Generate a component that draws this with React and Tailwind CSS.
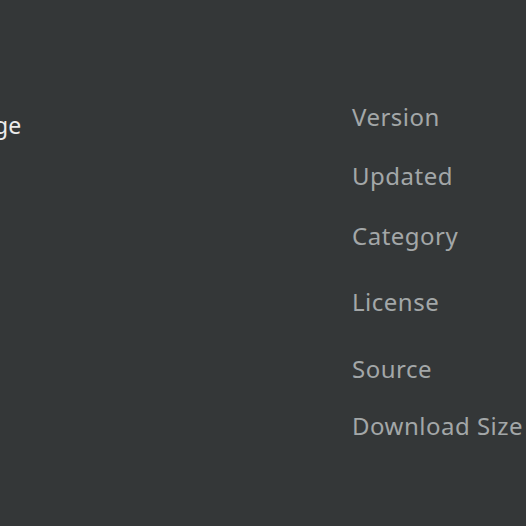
import React from "react";

const rows = [
  { label: "Version", gap: "mt-0" },
  { label: "Updated", gap: "mt-[27px]" },
  { label: "Category", gap: "mt-[28px]" },
  { label: "License", gap: "mt-[34px]" },
  { label: "Source", gap: "mt-[35px]" },
  { label: "Download Size", gap: "mt-[25px]" },
];

export default function App() {
  return (
    <div
      className="w-[526px] h-[526px] overflow-hidden bg-[#343738] flex"
      style={{ fontFamily: '"Noto Sans", "Open Sans", sans-serif' }}
    >
      <div className="w-[352px] shrink-0 pt-[109px] overflow-hidden">
        <div className="text-[23px] leading-[32px] text-[#ececec] -ml-[6px]">ge</div>
      </div>
      <div className="flex flex-col pt-[101px] whitespace-nowrap">
        {rows.map((r) => (
          <div key={r.label} className={`${r.gap} text-[24px] leading-[32px] tracking-[0.5px] text-[#a3a7a8]`}>
            {r.label}
          </div>
        ))}
      </div>
    </div>
  );
}
